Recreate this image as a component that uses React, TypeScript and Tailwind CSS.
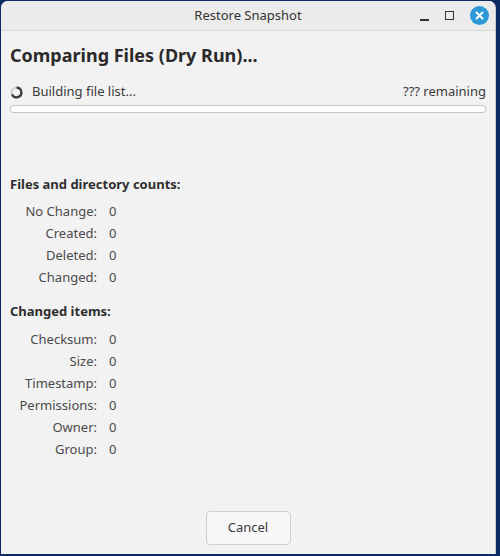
import React from 'react';

const countRows = [
    { label: 'No Change:', value: 0 },
    { label: 'Created:', value: 0 },
    { label: 'Deleted:', value: 0 },
    { label: 'Changed:', value: 0 },
];

const changedRows = [
    { label: 'Checksum:', value: 0 },
    { label: 'Size:', value: 0 },
    { label: 'Timestamp:', value: 0 },
    { label: 'Permissions:', value: 0 },
    { label: 'Owner:', value: 0 },
    { label: 'Group:', value: 0 },
];

function Spinner() {
    return (
        <svg width="13" height="13" viewBox="0 0 14 14" className="shrink-0">
            <circle cx="7" cy="7" r="5.2" fill="none" stroke="#d0d0d0" strokeWidth="2.4" />
            <path d="M7 1.8 A5.2 5.2 0 1 1 2.2 9" fill="none" stroke="#3a3a3a" strokeWidth="2.4" />
        </svg>
    );
}

function StatRows({ rows }: { rows: { label: string; value: number }[] }) {
    return (
        <div className="grid grid-cols-[87px_auto] gap-x-[12px]">
            {rows.map((row) => (
                <React.Fragment key={row.label}>
                    <div className="text-right leading-[22px] text-[#4a4a4a]">{row.label}</div>
                    <div className="leading-[22px] text-[#4a4a4a]">{row.value}</div>
                </React.Fragment>
            ))}
        </div>
    );
}

export default function App() {
    return (
        <div
            className="flex h-[556px] w-[500px] bg-[#0b2a66] pb-[2px] pl-px pr-[4px] pt-px"
            style={{ fontFamily: '"Noto Sans", sans-serif' }}
        >
            <div className="flex flex-1 flex-col overflow-hidden rounded-t-[7px] border-r border-[#c9c9c9] bg-[#f2f2f2] text-[13px]">
                {/* Title bar */}
                <div className="grid h-[30px] shrink-0 grid-cols-[1fr_auto_1fr] items-center border-b border-[#dadada] bg-[#ebebeb]">
                    <div />
                    <div className="text-[13px] text-[#333]">Restore Snapshot</div>
                    <div className="flex items-center justify-end gap-[16px] pr-[6px]">
                        <div className="mt-[9px] h-[1.5px] w-[9px] bg-[#333]" />
                        <div className="h-[9px] w-[9px] border-[1.5px] border-[#333]" />
                        <div className="flex h-[19px] w-[19px] items-center justify-center rounded-full bg-[#2c9ad8]">
                            <svg width="9" height="9" viewBox="0 0 9 9">
                                <path d="M1.5 1.5 L7.5 7.5 M7.5 1.5 L1.5 7.5" stroke="white" strokeWidth="2" strokeLinecap="round" />
                            </svg>
                        </div>
                    </div>
                </div>

                {/* Content */}
                <div className="flex flex-1 flex-col px-[9px]">
                    <h1 className="mt-[12px] text-[18px] font-bold leading-[24px] text-[#2a2a2a]">
                        Comparing Files (Dry Run)...
                    </h1>

                    <div className="mt-[15px] flex h-[20px] items-center gap-[9px] text-[#3a3a3a]">
                        <Spinner />
                        <span className="flex-1">Building file list...</span>
                        <span>??? remaining</span>
                    </div>

                    <div className="mt-[3px] h-[8px] rounded-[3px] border border-[#c4c4c4] bg-white" />

                    <div className="mt-[61px] font-bold leading-[20px] text-[#2e2e2e]">Files and directory counts:</div>
                    <div className="mt-[6px]">
                        <StatRows rows={countRows} />
                    </div>

                    <div className="mt-[13px] font-bold leading-[20px] text-[#2e2e2e]">Changed items:</div>
                    <div className="mt-[7px]">
                        <StatRows rows={changedRows} />
                    </div>

                    <div className="mb-[9px] mt-auto flex justify-center">
                        <button className="h-[34px] w-[85px] rounded-[4px] border border-[#cfcfcf] bg-[#f7f7f7] text-[13px] text-[#3a3a3a]">
                            Cancel
                        </button>
                    </div>
                </div>
            </div>
        </div>
    );
}
